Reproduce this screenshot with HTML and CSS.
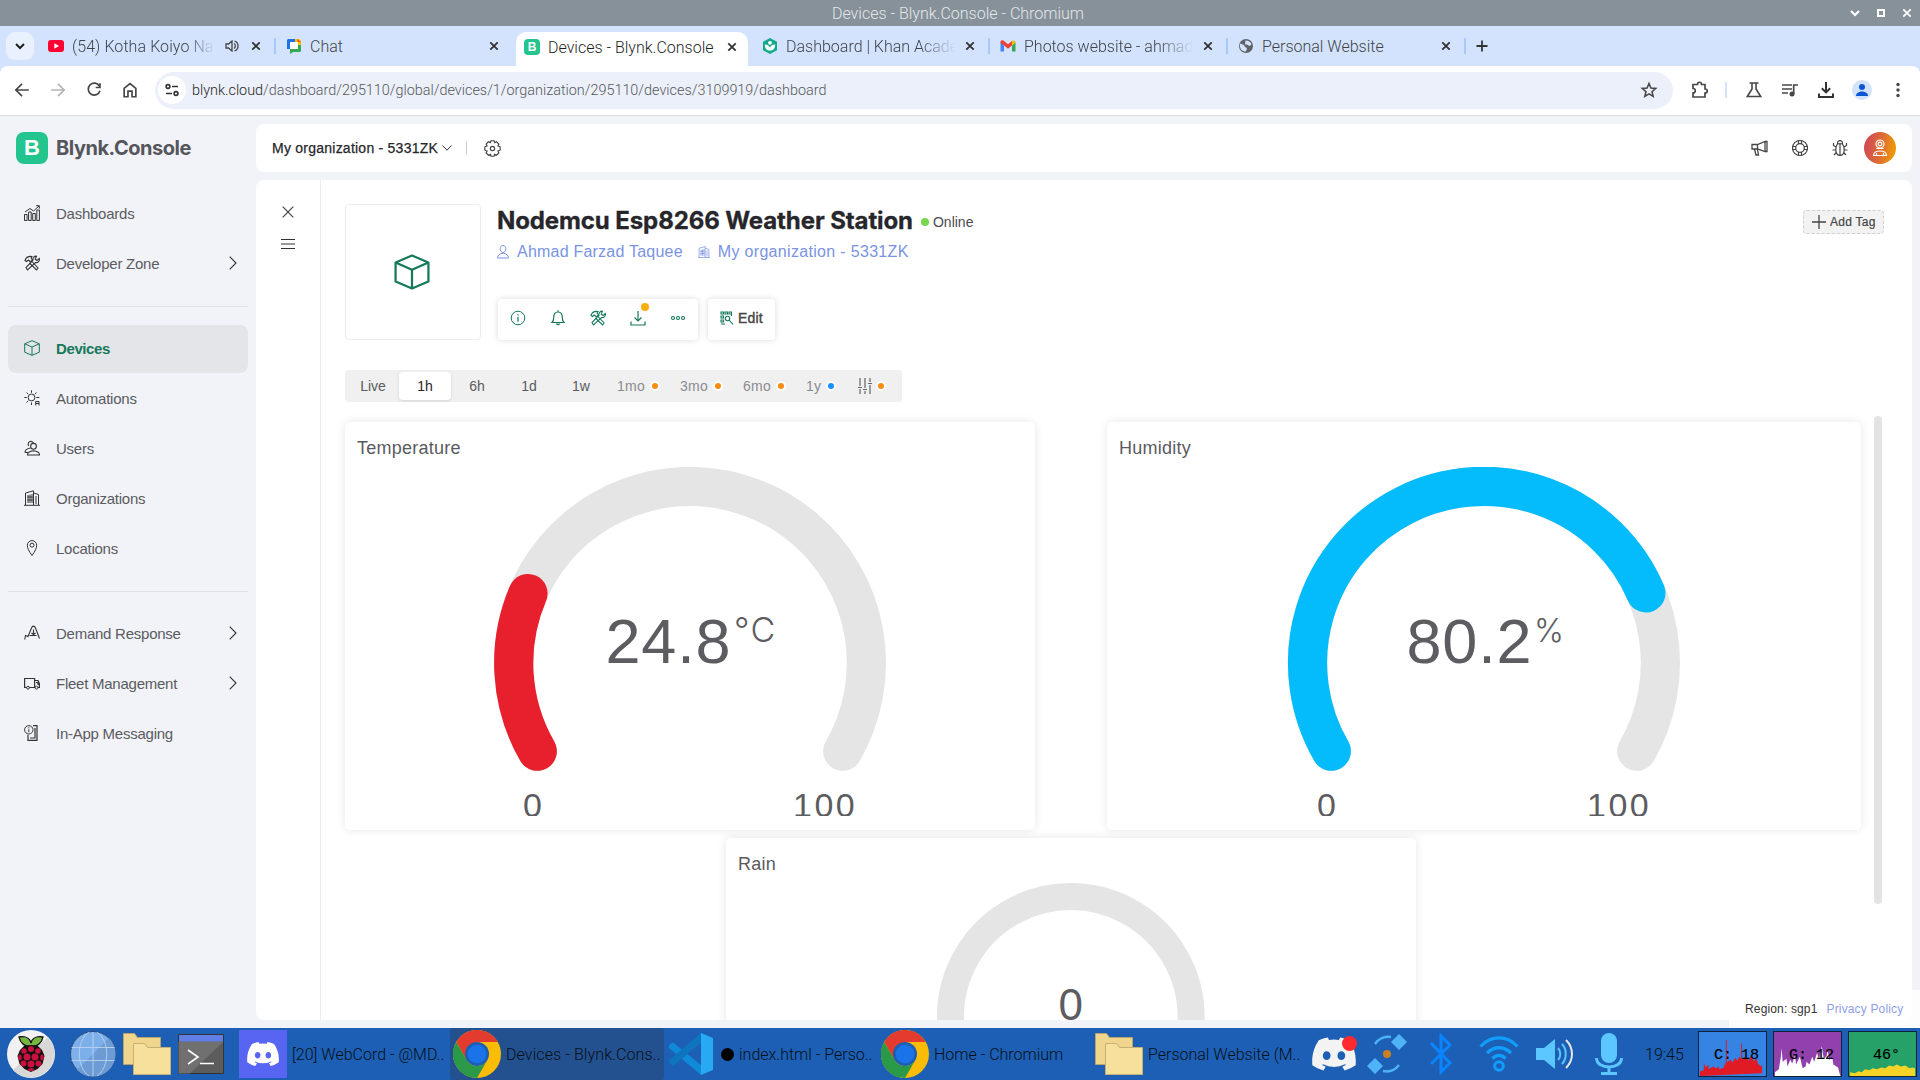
FILE: index.html
```html
<!DOCTYPE html>
<html lang="en">
<head>
<meta charset="utf-8">
<title>Devices - Blynk.Console</title>
<link rel="stylesheet" href="styles.css">
</head>
<body>
<svg class="sprite" width="0" height="0">
  <defs>
    <symbol id="x" viewBox="0 0 10 10"><path d="M1.3 1.3l7.4 7.4M8.7 1.3L1.3 8.7" fill="none" stroke="currentColor" stroke-width="1.8"/></symbol>
    <symbol id="tools" viewBox="0 0 16 16"><g fill="none" stroke="currentColor" stroke-width="1.1"><path d="M1 5.500C2 2.500 4.500 1 8 1.500L7 3l1.500 2-2 2-2-2L2.500 6.500z"/><path d="M7.500 6l6.500 7-1.500 2L5.500 8"/><path d="M12.500 1.200a3.200 3.200 0 0 0-3.500 4L2 12.500 3.500 15l8-7.500a3.200 3.200 0 0 0 3.800-4L13 5.500 11.200 4z"/></g></symbol>
    <symbol id="cube" viewBox="0 0 16 16"><path d="M8 .7L15.300 3.800v8.400L8 15.300.7 12.200V3.800zM.7 3.800L8 7l7.300-3.200M8 7v8.300" fill="none" stroke="currentColor" stroke-linejoin="round"/></symbol>
    <symbol id="building" viewBox="0 0 16 16"><path d="M0 15.300h16M1.500 15V3l8-2.200V15M9.500 3l5 1.500V15M4 5v8M6 4.500V13M8 4v9M12 6v8M3.500 7h5M3.500 10h5" fill="none" stroke="currentColor"/></symbol>
    <symbol id="chev" viewBox="0 0 8 14"><path d="M.7.700L7 7 .7 13.300" fill="none" stroke="currentColor" stroke-width="1.100"/></symbol>
    <symbol id="download" viewBox="0 0 16 16"><path d="M8 1v10M4.500 7.500L8 11l3.500-3.500M1 11.500V15h14v-3.500" fill="none" stroke="currentColor" stroke-width="1.200"/></symbol>
    <symbol id="chrome" viewBox="0 0 48 48"><circle cx="24" cy="24" r="24" fill="#fbbc05"/><path d="M3.200 12A24 24 0 0 1 44.800 12H24L13.600 30z" fill="#e33b2e"/><path d="M3.200 12A24 24 0 0 0 24 48L34.400 30A12 12 0 0 1 13.600 30z" fill="#2a9a48"/><circle cx="24" cy="24" r="12" fill="#1c5fb4"/><circle cx="24" cy="24" r="9.300" fill="#1a73e8"/></symbol>
    <symbol id="folders" viewBox="0 0 48 42"><path d="M.5.500h11l3 4h23v27H.5z" fill="#f0d68c" stroke="#b9a56c"/><path d="M10.500 10.500h11l3 4h23v27h-37z" fill="#f7e09b" stroke="#c4af74"/></symbol>
    <symbol id="discord" viewBox="0 0 24 18"><path fill="currentColor" fill-rule="evenodd" d="M20.300 1.500A19 19 0 0 0 15.400 0l-.7 1.300a18 18 0 0 0-5.400 0L8.600 0a19 19 0 0 0-4.900 1.500C.6 6.100-.2 10.700.2 15.100A20 20 0 0 0 6.200 18l1.300-2-2-1 .5-.4a14 14 0 0 0 12 0l.5.400-2 1 1.300 2a20 20 0 0 0 6-2.900c.5-5.200-.8-9.700-3.500-13.600zM8 12.300c-1.200 0-2.100-1.100-2.100-2.400S6.800 7.500 8 7.500s2.200 1.100 2.100 2.400c0 1.300-.9 2.400-2.100 2.400zm8 0c-1.200 0-2.100-1.100-2.100-2.400s.9-2.400 2.100-2.400 2.200 1.100 2.100 2.400c0 1.300-.9 2.400-2.100 2.400z"/></symbol>
  </defs>
</svg>

<header class="titlebar">
  <span class="titlebar-text">Devices - Blynk.Console - Chromium</span>
  <div class="window-buttons">
    <svg width="10" height="10" viewBox="0 0 10 10"><path d="M1 3l4 4 4-4" fill="none" stroke="#fff" stroke-width="2.200"/></svg>
    <svg width="10" height="10" viewBox="0 0 10 10"><path d="M2 2h6v6H2z" fill="none" stroke="#fff" stroke-width="2"/></svg>
    <svg width="10" height="10"><use href="#x" color="#fff"/></svg>
  </div>
</header>

<nav class="tabs">
  <span class="tab-search"><svg width="10" height="8" viewBox="0 0 10 8"><path d="M1 2l4 4 4-4" fill="none" stroke="#1f1f1f" stroke-width="2"/></svg></span>
  <div class="tab">
    <svg class="fav" viewBox="0 0 16 16"><rect y="2" width="16" height="12" rx="3" fill="#f03"/><path d="M6.300 5.300v5.400L11 8z" fill="#fff"/></svg>
    <span class="tab-title fade playing">(54) Kotha Koiyo Na</span>
    <svg class="sound" viewBox="0 0 14 12"><path d="M1 4v4h2.500L7 11V1L3.500 4z" fill="none" stroke="#474747" stroke-width="1.300"/><path d="M9 3.500a3 3 0 0 1 0 5M9.500 1a5.300 5.300 0 0 1 0 10" fill="none" stroke="#474747" stroke-width="1.300"/></svg>
    <svg class="close"><use href="#x"/></svg>
  </div>
  <div class="tab sep">
    <svg class="fav" viewBox="0 0 16 16"><path d="M2 1h8v3H5v7H1V2z" fill="#1a73e8"/><path d="M9 1h4l2 2v5h-3V4H9z" fill="#fbbc04"/><path d="M12 7h3v6l-1 1H7l-3 2v-5h8z" fill="#34a853"/><path d="M4 4h8v7H4z" fill="#fff"/><path d="M11 1l4 3h-3z" fill="#ea4335"/></svg>
    <span class="tab-title">Chat</span>
    <svg class="close"><use href="#x"/></svg>
  </div>
  <div class="tab active">
    <span class="fav blynk">B</span>
    <span class="tab-title">Devices - Blynk.Console</span>
    <svg class="close"><use href="#x"/></svg>
  </div>
  <div class="tab">
    <svg class="fav" viewBox="0 0 16 16"><path d="M8 0l7 3.800v8.400L8 16l-7-3.800V3.800z" fill="#14a98b"/><circle cx="8" cy="4.800" r="1.900" fill="#fff"/><path d="M2.800 6.500c3 0 4.600 1.300 5.200 3.200.6-1.900 2.200-3.200 5.200-3.200 0 4-2 6-5.200 6s-5.200-2-5.200-6z" fill="#fff"/></svg>
    <span class="tab-title fade">Dashboard | Khan Acade</span>
    <svg class="close"><use href="#x"/></svg>
  </div>
  <div class="tab sep">
    <svg class="fav" viewBox="0 0 16 16"><path d="M.5 4v9.500H4V7.500z" fill="#4285f4"/><path d="M12 7.500v6h3.500V4z" fill="#34a853"/><path d="M.5 3.500C1 2 3 2 4 3l4 3.200L12 3v4.500L8 10.700 4 7.500.5 5z" fill="#ea4335"/><path d="M12 3c1.500-1.200 3.500-.5 3.500 1.300L12 7.500z" fill="#fbbc04"/></svg>
    <span class="tab-title fade">Photos website - ahmad</span>
    <svg class="close"><use href="#x"/></svg>
  </div>
  <div class="tab sep last">
    <svg class="fav" viewBox="0 0 16 16"><circle cx="8" cy="8" r="7" fill="#5f6368"/><path d="M2 5.500l4 1.500 1 2 2 1-1 3.500C4 13.500 2 11 2 8zM7.500 2.500c3 0 5 1 6 4L11.500 8 9 6.500H7z" fill="#d3e3fd"/></svg>
    <span class="tab-title">Personal Website</span>
    <svg class="close"><use href="#x"/></svg>
  </div>
  <svg class="new-tab" viewBox="0 0 12 12"><path d="M6 .5v11M.5 6h11" stroke="#333" stroke-width="1.800"/></svg>
</nav>

<div class="toolbar">
  <div class="nav-buttons">
    <svg viewBox="0 0 16 16"><path d="M14 8H3M8 2.500L2.500 8 8 13.500" fill="none" stroke="#474747" stroke-width="1.500"/></svg>
    <svg viewBox="0 0 16 16"><path d="M2 8h11M8 2.500L13.500 8 8 13.500" fill="none" stroke="#b4b4b4" stroke-width="1.500"/></svg>
    <svg viewBox="0 0 16 16"><path d="M12.800 4.500A5.300 5.300 0 1 0 13.300 8.700M13.300 2v3.800H9.500" fill="none" stroke="#474747" stroke-width="1.500"/></svg>
    <svg viewBox="0 0 16 16"><path d="M2.800 6.500L8 2.300l5.200 4.200V14H9.800V9H6.200v5H2.800z" fill="none" stroke="#474747" stroke-width="1.500"/></svg>
  </div>
  <div class="omnibox">
    <span class="site-info"><svg width="14" height="14" viewBox="0 0 14 14"><g fill="none" stroke="#333" stroke-width="1.600"><circle cx="3" cy="3.500" r="1.900"/><path d="M7 3.500h6M1 10.500h6"/><circle cx="11" cy="10.500" r="1.900"/></g></svg></span>
    <span class="url"><b>blynk.cloud</b>/dashboard/295110/global/devices/1/organization/295110/devices/3109919/dashboard</span>
    <svg class="star" viewBox="0 0 16 16"><path d="M8 2.200l1.700 4 4.300.4-3.300 2.900 1 4.200L8 11.500l-3.700 2.200 1-4.200L2 6.600l4.300-.4z" fill="none" stroke="#474747" stroke-width="1.400"/></svg>
  </div>
  <div class="browser-actions">
    <svg viewBox="0 0 18 18"><path d="M2 3.500h4.500c0-3 4-3 4 0H14V8c3 0 3 4 0 4v4H2v-4c3 0 3-4.500 0-4.500z" fill="none" stroke="#474747" stroke-width="1.700"/></svg>
    <i class="action-sep"></i>
    <svg viewBox="0 0 18 18"><path d="M4.500 2h9M7 2v6l-4.700 7.500h13.400L11 8V2" fill="none" stroke="#474747" stroke-width="1.600"/></svg>
    <svg viewBox="0 0 18 18"><path d="M1 4h10M1 8h10M1 12h6" stroke="#474747" stroke-width="1.700"/><circle cx="11" cy="13" r="2.500" fill="#474747"/><path d="M12.700 13V4H17" fill="none" stroke="#474747" stroke-width="1.700"/></svg>
    <svg viewBox="0 0 18 18"><path d="M9 1v10M4.800 7.200L9 11.400l4.200-4.200M2 12.500V16h14v-3.500" fill="none" stroke="#333" stroke-width="2"/></svg>
    <span class="profile"><svg width="14" height="14" viewBox="0 0 14 14"><circle cx="7" cy="4" r="3" fill="#0b57d0"/><path d="M1 13c0-6 12-6 12 0z" fill="#0b57d0"/></svg></span>
    <svg viewBox="0 0 18 18"><g fill="#474747"><circle cx="9" cy="3.500" r="1.700"/><circle cx="9" cy="9" r="1.700"/><circle cx="9" cy="14.500" r="1.700"/></g></svg>
  </div>
</div>

<div class="app">
  <aside class="sidebar">
    <div class="brand"><span class="brand-mark">B</span><span class="brand-name">Blynk.Console</span></div>
    <ul class="menu">
      <li><svg viewBox="0 0 16 16"><path d="M.5 9.500h2.600v6H.5zM4.600 7h2.600v8.500H4.600zM8.700 8.500h2.600v7H8.700zM12.800 5h2.600v10.500h-2.600zM1 7l5-3.500L9.500 6 15 1M12 .7h3.300v3" fill="none" stroke="currentColor"/></svg><span>Dashboards</span></li>
      <li><svg><use href="#tools"/></svg><span>Developer Zone</span><svg class="chev"><use href="#chev"/></svg></li>
    </ul>
    <ul class="menu">
      <li class="selected"><svg><use href="#cube"/></svg><span>Devices</span></li>
      <li><svg viewBox="0 0 16 16"><g fill="none" stroke="currentColor"><circle cx="7.500" cy="7.500" r="3.400"/><path d="M7.500.300v2.500M7.500 12.500V15M.3 7.500h2.500M12.300 7.500h3M2.500 2.500l1.700 1.700M12.500 2.500l-1.700 1.700M2.500 12.500l1.700-1.700M11.700 15.500v-4h3.300v4M11.700 13.500H15"/></g></svg><span>Automations</span></li>
      <li><svg viewBox="0 0 16 16"><g fill="none" stroke="currentColor" stroke-width="1.100"><path d="M4.500 6C2.500 1 9 0 9.500 3.500"/><circle cx="9.500" cy="6.300" r="2.900"/><path d="M3.500 15h12c0-3-2-4-6-4.300-4 .3-6 1.300-6 4.300zM1 12.500c0-3 2-4 5.500-4.500M1 12.500h3"/></g></svg><span>Users</span></li>
      <li><svg><use href="#building"/></svg><span>Organizations</span></li>
      <li><svg viewBox="0 0 16 16"><path d="M8 15.500C5 11 3.300 8.500 3.300 5.300a4.700 4.700 0 0 1 9.400 0C12.700 8.500 11 11 8 15.500z" fill="none" stroke="currentColor"/><circle cx="8" cy="5.200" r="2" fill="none" stroke="currentColor"/></svg><span>Locations</span></li>
    </ul>
    <ul class="menu">
      <li><svg viewBox="0 0 16 16"><path d="M.7 14.500l.8-4 2.500 1L7.500 3C8.500.500 10.500.500 11.500 3l4 10.500M5.500 10.500h7M9.500 4.500v5M7.500 8l2 1.500 2-1.500" fill="none" stroke="currentColor" stroke-width="1.100"/></svg><span>Demand Response</span><svg class="chev"><use href="#chev"/></svg></li>
      <li><svg viewBox="0 0 16 16"><path d="M.6 3.500h10v9H.6zM10.600 5.500h3.500l1.300 3v4h-4.800M12 7.500h2v2h1.500" fill="none" stroke="currentColor" stroke-width="1.200"/><circle cx="4" cy="12.700" r="1.400" fill="#f2f3f8" stroke="currentColor"/><circle cx="12.500" cy="12.700" r="1.400" fill="#f2f3f8" stroke="currentColor"/></svg><span>Fleet Management</span><svg class="chev"><use href="#chev"/></svg></li>
      <li><svg viewBox="0 0 16 16"><path d="M9 .7h4v14.600H4V10M6 13h5V3" fill="none" stroke="currentColor" stroke-width="1.200"/><circle cx="4.800" cy="4.800" r="4.200" fill="#f2f3f8" stroke="currentColor"/><path d="M4.800 2.200v1.200M4.800 4.300v3" stroke="currentColor"/></svg><span>In-App Messaging</span></li>
    </ul>
  </aside>

  <div class="content">
    <div class="orgbar">
      <span class="org-name">My organization - 5331ZK</span>
      <svg class="org-chev" viewBox="0 0 10 6"><path d="M.5.500L5 5.200 9.500.500" fill="none" stroke="#333"/></svg>
      <i class="org-sep"></i>
      <svg class="gear" viewBox="0 0 16 16"><g fill="none" stroke="#444" stroke-width="1.100"><path d="M6.500.700h3l.5 1.800 1.800-.8 2.200 2.100-.9 1.800 2.100.8v3.200l-2.100.8.900 1.800-2.200 2.100-1.800-.8-.5 1.800h-3L6 13.500l-1.800.8L2 12.200l.9-1.800-2.100-.8V6.400l2.100-.8L2 3.800l2.200-2.100 1.800.8z"/><circle cx="8" cy="8" r="2"/></g></svg>
      <div class="org-actions">
        <svg viewBox="0 0 18 18"><path d="M1 5.500h5.500L14 2.500v10L6.500 10H1zM6.500 5.500V10M3.500 10l1.500 6h2.500l-1-5.500M14 2.500h2v10h-2" fill="none" stroke="#444" stroke-width="1.300"/></svg>
        <svg viewBox="0 0 18 18"><g fill="none" stroke="#444" stroke-width="1.200"><circle cx="9" cy="9" r="7.500"/><circle cx="9" cy="9" r="4.300"/><path d="M7.500 1.500v3.500M10.500 1.500v3.500M7.500 16.500V13M10.500 16.500V13M1.500 7.500H5M1.500 10.500H5M16.500 7.500H13M16.500 10.500H13"/></g></svg>
        <svg viewBox="0 0 18 18"><path d="M9 4.500c3 0 4.200 2.500 4.200 6S11.500 16.500 9 16.500s-4.200-2.500-4.200-6S6 4.500 9 4.500zM9 5v11.500M6.500 5c-.5-4.500 5.500-4.500 5 0M5 8L2.500 6.500V4M13 8l2.500-1.500V4M4.800 11H1.500M13.200 11h3.300M5.300 13.500L3 16M12.700 13.500L15 16" fill="none" stroke="#444" stroke-width="1.200"/></svg>
        <span class="avatar"><svg width="16" height="18" viewBox="0 0 16 18"><g fill="none" stroke="#fff" stroke-width="1.200"><circle cx="8" cy="5" r="4"/><circle cx="8" cy="5" r="1.800"/><path d="M4.500 9.500h7M1.500 16.500c0-6 13-6 13 0zM4.500 16.500v-2.500M11.500 16.500v-2.500"/></g></svg></span>
      </div>
    </div>

    <main class="panel">
      <div class="rail">
        <svg width="12" height="12" viewBox="0 0 12 12"><path d="M.7.700l10.600 10.600M11.300.7L.7 11.300" stroke="#444" stroke-width="1.200"/></svg>
        <svg width="14" height="12" viewBox="0 0 14 12"><path d="M0 1.500h14M0 6h14M0 10.500h14" stroke="#333" stroke-width="1.200"/></svg>
      </div>
      <div class="device">
        <section class="device-head">
          <div class="device-image"><svg width="36" height="36"><use href="#cube"/></svg></div>
          <div class="device-info">
            <div class="device-title"><h1>Nodemcu Esp8266 Weather Station</h1><i class="online-dot"></i><span class="online">Online</span></div>
            <div class="device-meta">
              <svg viewBox="0 0 12 14"><path d="M6 .6c1.800 0 2.800 1.200 2.800 3.200S7.500 7.500 6 7.500 3.200 5.800 3.200 3.800 4.200.6 6 .6zM.6 13c0-3 2-4.300 5.400-4.800 3.400.5 5.400 1.800 5.400 4.800z" fill="none" stroke="currentColor"/></svg>
              <span>Ahmad Farzad Taquee</span>
              <svg class="meta-org"><use href="#building"/></svg>
              <span class="meta-name">My organization - 5331ZK</span>
            </div>
            <div class="device-actions">
              <div class="action-group">
                <svg viewBox="0 0 16 16"><circle cx="8" cy="8" r="6.800" fill="none" stroke="currentColor"/><path d="M8 4.200v1.300M8 6.800v5" stroke="currentColor" stroke-width="1.200"/></svg>
                <svg viewBox="0 0 16 16"><path d="M2 12.500h12c-1.500-1.500-1.700-2.500-1.700-5C12.300 4 10.500 2 8 2S3.700 4 3.700 7.500c0 2.500-.2 3.500-1.700 5zM8 .3V2M6.500 13.500c.5 1.500 2.500 1.500 3 0" fill="none" stroke="currentColor" stroke-width="1.200"/></svg>
                <svg><use href="#tools"/></svg>
                <span class="badged"><svg><use href="#download"/></svg><i></i></span>
                <svg viewBox="0 0 16 16"><g fill="none" stroke="currentColor" stroke-width="1.100"><circle cx="3" cy="8" r="1.500"/><circle cx="8" cy="8" r="1.500"/><circle cx="13" cy="8" r="1.500"/></g></svg>
              </div>
              <div class="edit"><svg viewBox="0 0 14 14"><g fill="none" stroke="currentColor" stroke-width="1.100"><path d="M1 1h2.500v2H1zM5 1h2.500v2H5zM9 1h2.500v2H9zM1 5h2.500v2H1zM1 9h2.500v2H1zM1 13h4M11.500 3v2"/><circle cx="7.500" cy="7.500" r="2.200"/><path d="M9 9l4 4.300"/></g></svg><span>Edit</span></div>
            </div>
          </div>
          <div class="add-tag"><svg width="14" height="14" viewBox="0 0 14 14"><path d="M7 0v14M0 7h14" stroke="#444" stroke-width="1.300"/></svg><span>Add Tag</span></div>
        </section>

        <div class="ranges">
          <span>Live</span><span class="on">1h</span><span>6h</span><span>1d</span><span>1w</span>
          <span class="pro">1mo<i></i></span><span class="pro">3mo<i></i></span><span class="pro">6mo<i></i></span><span class="pro year">1y<i class="annual"></i></span>
          <span class="pro custom"><svg width="14" height="16" viewBox="0 0 14 16"><path d="M2 0v8M2 11v5M7 0v10M7 13v3M12 0v4M12 7v9M0 9.500h4M5 11.500h4M10 5.500h4" fill="none" stroke="#666" stroke-width="1.200"/></svg><i></i></span>
        </div>

        <div class="widgets">
          <div class="row">
            <article class="card">
              <h2>Temperature</h2>
              <svg class="gauge" viewBox="345 467 690 349" width="690" height="349">
                <path class="track" d="M537.300 751.200A176.400 176.400 0 1 1 842.700 751.200"/>
                <path class="bar red" d="M537.300 751.200A176.400 176.400 0 0 1 528 593.500"/>
                <text class="value" x="605.500" y="662.500">24.8</text>
                <text class="unit" x="734" y="642">°C</text>
                <text class="limit" x="523" y="817">0</text>
                <text class="limit" x="793" y="817">100</text>
              </svg>
            </article>
            <article class="card wide">
              <h2>Humidity</h2>
              <svg class="gauge" viewBox="1107 467 754 349" width="754" height="349">
                <path class="track" d="M1331.300 751.200A176.400 176.400 0 1 1 1636.700 751.200"/>
                <path class="bar blue" d="M1331.300 751.200A176.400 176.400 0 1 1 1645.900 592.900"/>
                <text class="value" x="1406.500" y="662.500">80.2</text>
                <text class="unit percent" x="1534" y="642">%</text>
                <text class="limit" x="1317" y="817">0</text>
                <text class="limit" x="1587" y="817">100</text>
              </svg>
            </article>
          </div>
          <div class="row second">
            <article class="card">
              <h2>Rain</h2>
              <svg class="gauge" viewBox="726 883 690 349" width="690" height="349">
                <path class="track thin" d="M966.600 1077A120.300 120.300 0 1 1 1175 1077"/>
                <text class="value small" x="1058.500" y="1019.500">0</text>
              </svg>
            </article>
          </div>
          <i class="scrollbar"></i>
        </div>
      </div>
    </main>
    <footer class="region"><span>Region: sgp1</span><a>Privacy Policy</a></footer>
  </div>
</div>

<footer class="taskbar">
  <svg class="t-pi" viewBox="0 0 48 48"><circle cx="24" cy="24" r="24" fill="#f1f1f1"/><path d="M6 40A24 24 0 0 0 41 7z" fill="#d8d8d8"/><path d="M23.500 16C18 17 13 13 12 7c6-1 11 1 12 6 1-5 6-7 12-6-1 6-6 10-11.500 9z" fill="#77b543" stroke="#111" stroke-width="1.300"/><path d="M24 15l7 1 4 4 2.500 6-2 8-5 5-6.500 3-6.500-3-5-5-2-8L13 20l4-4z" fill="#111"/><g fill="#c9103f"><circle cx="24" cy="19" r="3"/><circle cx="17" cy="21" r="2.800"/><circle cx="31" cy="21" r="2.800"/><circle cx="20" cy="27" r="3.500"/><circle cx="28" cy="27" r="3.500"/><ellipse cx="13" cy="27.500" rx="1.700" ry="3"/><ellipse cx="35" cy="27.500" rx="1.700" ry="3"/><circle cx="24" cy="34" r="3.500"/><circle cx="16.500" cy="33.500" r="3"/><circle cx="31.500" cy="33.500" r="3"/><ellipse cx="24" cy="39.500" rx="3" ry="1.500"/></g></svg>
  <svg class="t-globe" viewBox="0 0 46 46"><circle cx="23" cy="23" r="22.500" fill="#7db0ea" stroke="#294c7b"/><path d="M7 39A22.500 22.500 0 0 0 39 7z" fill="#6c9cd3"/><path d="M23 1v44M1.500 16.500h43M1.500 29.500h43M19 1C6 10 6 36 19 45M27 1c13 9 13 35 0 44" fill="none" stroke="#b9d3f0" stroke-width=".9"/></svg>
  <svg class="t-folders"><use href="#folders"/></svg>
  <svg class="t-term" viewBox="0 0 46 40"><path d="M.5.500h45v39H.5z" fill="#5c5c5c" stroke="#333"/><path d="M.5 7.500h45L12 39.500H.5z" fill="#707070"/><path d="M1 1h44v6.500H1z" fill="#5f7fe6"/><path d="M10 16l10 7-10 7M22 29.500h14" fill="none" stroke="#fff" stroke-width="1.600"/></svg>
  <div class="task webcord"><span class="discord-tile"><svg width="32" height="24"><use href="#discord"/></svg></span><span>[20] WebCord - @MD..</span></div>
  <div class="task current"><svg class="ic48"><use href="#chrome"/></svg><span>Devices - Blynk.Cons..</span></div>
  <div class="task vscode"><svg width="44" height="42" viewBox="0 0 44 42"><path d="M0 12l4-2.500L32 32v10L0 15z" fill="#0f8ad8"/><path d="M0 30l4 3L32 10V0L0 27z" fill="#0d74bd"/><path d="M32 0l12 5v32l-12 5z" fill="#27a9f4"/></svg><b class="unsaved"></b><span>index.html - Perso..</span></div>
  <div class="task home"><svg class="ic48"><use href="#chrome"/></svg><span>Home - Chromium</span></div>
  <div class="task files"><svg width="48" height="42"><use href="#folders"/></svg><span>Personal Website (M..</span></div>
  <div class="tray">
    <span class="t-discord"><svg width="44" height="36"><use href="#discord"/></svg><i></i></span>
    <svg class="t-conn" viewBox="0 0 40 40"><path d="M8 10A16 16 0 0 1 24 3M32 31A16 16 0 0 1 16 37" fill="none" stroke="#4db2f7" stroke-width="2.500"/><path d="M32 0l8 8-8 8-8-8zM8 24l8 8-8 8-8-8z" fill="#4fb3f8"/><circle cx="20" cy="20" r="4" fill="#c9801f"/></svg>
    <svg class="t-bt" viewBox="0 0 22 42"><path d="M1 10l19 20-9 9V3l9 9L1 31" fill="none" stroke="#0a84ff" stroke-width="3"/></svg>
    <svg class="t-wifi" viewBox="0 0 40 36"><path d="M1.500 10.500C12-1 28-1 38.500 10.500M8 17c7-7 17-7 24 0M13.500 22.500c4-4 9-4 13 0" fill="none" stroke="#109dfb" stroke-width="3.300"/><circle cx="20" cy="30" r="4.300" fill="none" stroke="#109dfb" stroke-width="3"/></svg>
    <svg class="t-vol" viewBox="0 0 38 32"><path d="M0 10h8L19 1v30L8 22H0z" fill="#5cc6ff"/><path d="M22 10c3 3 3 9 0 12M26 6c5 5 5 15 0 20" fill="none" stroke="#5cc6ff" stroke-width="2"/><path d="M30 2c8 8 8 20 0 28" fill="none" stroke="#e6e6e6" stroke-width="2"/></svg>
    <svg class="t-mic" viewBox="0 0 28 42"><rect x="6" width="16" height="30" rx="8" fill="#5cc6ff"/><path d="M1.500 25c0 12 25 12 25 0M14 34v6M6 40.500h16" fill="none" stroke="#5cc6ff" stroke-width="3"/></svg>
    <span class="clock">19:45</span>
    <span class="meter cpu"><svg viewBox="0 0 68 46"><path d="M0 46V41l4-1V32l2 5 3-3v5l5-3 3 2 3-2v3l5-2 1-5 1 3V8h1v24l4-3 2 3 3-5 2 3 2-4 2 2V12h1v17l4-3 3 4 2-5 3 5 3-2 2 6 4 2v7z" fill="#e01b24"/></svg><span>C: 18</span></span>
    <span class="meter gpu"><svg viewBox="0 0 68 46"><path d="M0 46V42l4-3 2-12 1-10 1 14 4-3 1 8 3-7 2 4 3-9 1 10 4-8 3 12 3-2 1-5 3 3 3-8 2 5 3-9 2 7 3-14 2 13 3-3 1-6 2 10 3-2 1 7 5 3 2 8 2 3v4z" fill="#fff"/></svg><span>G: 12</span></span>
    <span class="meter temp"><svg viewBox="0 0 68 46"><path d="M0 46v-4l5 1 4-2 3 1 4-3 4 1 4-2 4 1 5-2 4 1 4-3 4 1 4-2 4 2 5-1 4 3 4-1 2 1v8z" fill="#f5d327"/></svg><span>46°</span></span>
  </div>
</footer>
</body>
</html>
```
FILE: styles.css
```css
* { box-sizing: border-box; }
body { margin: 0; width: 1920px; height: 1080px; overflow: hidden; display: flex; flex-direction: column; font-family: "Liberation Sans", Arial, sans-serif; color: #5a5b60; background: #f2f3f8; }
svg { display: block; flex: none; }
.sprite { position: absolute; }
h1, h2, ul { margin: 0; padding: 0; list-style: none; }
span { white-space: nowrap; }

/* browser window */
.titlebar { flex: none; height: 26px; background: #879199; display: grid; grid-template-columns: 1fr auto 1fr; align-items: center; color: #e4e7ea; font: 300 16px Roboto, sans-serif; }
.titlebar-text { grid-column: 2; margin-left: -4px; }
.window-buttons { justify-self: end; display: flex; gap: 16px; padding-right: 8px; }
.tabs { flex: none; height: 48px; padding-bottom: 8px; margin-bottom: -8px; background: #d3e3fd; display: flex; align-items: center; font: 300 16px Roboto, sans-serif; color: #3f4348; }
.tab-search { width: 28px; height: 28px; margin: 0 2px 0 6px; border-radius: 9px; background: #eaf1fe; display: grid; place-items: center; }
.tab { width: 238px; height: 34px; display: flex; align-items: center; padding: 0 13px 0 12px; position: relative; flex: none; }
.tab.sep::before, .tab.last::after { content: ""; position: absolute; left: 0; top: 9px; width: 2px; height: 16px; background: #a8c7fa; }
.tab.last::after { left: auto; right: -2px; }
.tab.active { width: 232px; margin: 0 2px 0 4px; padding: 0 11px 4px 8px; background: #fff; border-radius: 10px 10px 0 0; align-self: flex-end; color: #1f1f1f; }
.fav { width: 16px; height: 16px; margin-right: 8px; flex: none; }
.fav.blynk { background: #23c48e; border-radius: 4px; color: #fff; font: bold 12px/16px "Liberation Sans", sans-serif; text-align: center; }
.tab-title { flex: 1; overflow: hidden; }
.fade { -webkit-mask-image: linear-gradient(90deg, #000 78%, transparent 99%); mask-image: linear-gradient(90deg, #000 78%, transparent 99%); margin-right: 8px; }
.playing { letter-spacing: .08px; }
.sound { width: 14px; height: 12px; margin-right: 12px; }
.close { width: 10px; height: 10px; color: #333; }
.new-tab { width: 12px; height: 12px; margin-left: 12px; }
.toolbar { flex: none; height: 50px; background: #fff; border-bottom: 1px solid #dcdcdc; border-radius: 8px 8px 0 0; display: flex; align-items: center; padding: 0 13px; }
.nav-buttons { display: flex; gap: 18px; width: 144px; padding-bottom: 1px; }
.nav-buttons svg { width: 18px; height: 18px; }
.omnibox { width: 1518px; height: 37px; border-radius: 19px; background: #ecf0fa; display: flex; align-items: center; padding: 0 15px 1px 3px; flex: none; }
.site-info { width: 28px; height: 28px; border-radius: 50%; background: #fff; display: grid; place-items: center; }
.url { flex: 1; font: 300 14.400px Roboto, sans-serif; color: #55585c; margin-left: 6px; }
.url b { font-weight: 300; color: #1f1f1f; }
.star { width: 18px; height: 18px; }
.browser-actions { flex: none; display: flex; align-items: center; gap: 18px; margin-left: 18px; padding-bottom: 1px; }
.browser-actions svg { width: 18px; height: 18px; }
.action-sep { width: 2px; height: 16px; background: #d3e3fd; margin-left: -2px; }
.profile { width: 20px; height: 20px; border-radius: 50%; background: #d3e3fd; display: grid; place-items: center; margin: 0 -1px; }
.browser-actions .profile svg { width: 14px; height: 14px; }

/* console */
.app { height: 912px; flex: none; display: flex; }
.sidebar { width: 256px; padding: 16px 8px 0; }
.brand { display: flex; align-items: center; gap: 8px; padding-left: 8px; height: 32px; margin-bottom: 26px; }
.brand-mark { width: 32px; height: 32px; border-radius: 8px; background: #23c48e; color: #fff; font: bold 22px/32px "Liberation Sans", sans-serif; text-align: center; }
.brand-name { font: bold 20px Inter, sans-serif; letter-spacing: -.47px; color: #55565b; }
.menu { display: flex; flex-direction: column; gap: 2px; padding-bottom: 18px; }
.menu + .menu { border-top: 1px solid #e0e1e6; padding-top: 18px; }
.menu li { height: 48px; border-radius: 8px; display: flex; align-items: center; padding: 0 11px 2px 16px; font-size: 15px; letter-spacing: -.25px; }
.menu li > svg { width: 16px; height: 16px; margin-right: 16px; color: #333; }
.menu li span { flex: 1; }
.menu li > .chev { width: 8px; height: 14px; margin: 0; }
.menu .selected { background: #e4e5e9; color: #15795a; font-weight: bold; letter-spacing: -.39px; }
.menu .selected > svg { color: #15795a; }
.content { width: 1656px; padding-top: 8px; position: relative; }
.orgbar { height: 48px; background: #fff; border-radius: 8px; display: flex; align-items: center; padding: 0 16px; margin-bottom: 8px; }
.org-name { font-size: 14px; letter-spacing: .24px; color: #26272b; -webkit-text-stroke: .25px; }
.org-chev { width: 10px; height: 6px; margin-left: 4px; }
.org-sep { width: 1px; height: 14px; background: #ccc; margin: 0 17px 0 14px; }
.gear { width: 17px; height: 17px; }
.org-actions { margin-left: auto; display: flex; align-items: center; gap: 22px; }
.org-actions svg { width: 18px; height: 18px; }
.org-actions .avatar { width: 32px; height: 32px; border-radius: 50%; background: linear-gradient(100deg, #d0435c, #dd6a35 50%, #f2a500); display: grid; place-items: center; margin-left: -7px; }
.panel { height: 840px; background: #fff; border-radius: 8px; display: flex; overflow: hidden; }
.rail { width: 65px; border-right: 1px solid #ececef; padding: 26px 0 0; display: flex; flex-direction: column; align-items: center; gap: 20px; }
.device { width: 1591px; padding: 24px 28px 0 24px; }
.device-head { display: flex; height: 136px; }
.device-image { width: 136px; border: 1px solid #ececec; border-radius: 4px; display: grid; place-items: center; color: #15795a; padding-right: 2px; }
.device-info { flex: 1; padding-left: 16px; display: flex; flex-direction: column; }
.device-title { height: 32px; display: flex; align-items: center; }
h1 { font: bold 24px Inter, sans-serif; letter-spacing: -.1px; color: #26262b; white-space: nowrap; -webkit-text-stroke: .3px; }
.online-dot { width: 8px; height: 8px; border-radius: 50%; background: #7ad651; margin: 4px 4px 0 8px; }
.online { font-size: 14px; margin-top: 4px; color: #4b4c51; }
.device-meta { display: flex; align-items: center; height: 30px; margin-top: 1px; color: #7b93e3; font-size: 16px; letter-spacing: .22px; }
.device-meta svg { width: 12px; height: 14px; margin-right: 8px; }
.device-meta .meta-org { margin-left: 15px; }
.meta-name { letter-spacing: .32px; }
.device-actions { display: flex; gap: 10px; margin-top: auto; padding-left: 1px; }
.action-group, .edit { height: 41px; border-radius: 4px; box-shadow: 0 0 6px rgba(0,0,0,.15); display: flex; align-items: center; color: #15795a; padding-bottom: 3px; }
.action-group { width: 200px; padding-left: 12px; gap: 24px; }
.action-group svg { width: 16px; height: 16px; }
.badged { position: relative; }
.badged i { position: absolute; right: -3px; top: -7px; width: 8px; height: 8px; border-radius: 50%; background: #faad14; }
.edit { width: 67px; padding-left: 12px; gap: 4px; font-size: 14px; letter-spacing: .2px; }
.edit svg { width: 14px; height: 14px; }
.edit span { color: #444; -webkit-text-stroke: .4px; }
.add-tag { height: 24px; width: 81px; margin-top: 6px; border: 1px dashed #cfcfcf; border-radius: 4px; background: #f2f2f2; display: flex; align-items: center; padding-left: 8px; gap: 4px; font-size: 12px; letter-spacing: .25px; color: #444; -webkit-text-stroke: .2px; }
.ranges { margin-top: 30px; width: 557px; height: 32px; background: #f0f0f0; border-radius: 4px; padding: 2px; display: flex; align-items: center; font-size: 14px; }
.ranges > span { flex: none; width: 52px; height: 28px; display: flex; align-items: center; justify-content: center; border-radius: 4px; }
.ranges .on { background: #fff; box-shadow: 0 1px 3px rgba(0,0,0,.12); color: #26262b; }
.ranges .pro { width: 63px; color: #8b8c90; justify-content: flex-start; padding-left: 10px; gap: 5px; letter-spacing: .3px; }
.ranges .pro.year, .ranges .pro.custom { width: 52px; }
.ranges .pro.custom { gap: 4px; }
.ranges i { width: 10px; height: 10px; border: 2px solid #fff; background: #fa8c16; border-radius: 50%; }
.ranges i.annual { background: #1890ff; }
.widgets { position: relative; margin-top: 20px; display: flex; flex-direction: column; gap: 8px; }
.row { display: flex; gap: 72px; }
.second { padding-left: 381px; }
.card { width: 690px; height: 408px; background: #fff; border-radius: 5px; box-shadow: 0 0 10px rgba(0,0,0,.1); flex: none; }
.card.wide { width: 754px; }
.card h2 { height: 45px; padding: 16px 12px 0; font: 18px/21px "Liberation Sans", sans-serif; letter-spacing: .25px; }
.track, .bar { fill: none; stroke: #e5e5e5; stroke-width: 39.2; stroke-linecap: round; }
.thin { stroke-width: 27; }
.red { stroke: #e8202d; }
.blue { stroke: #04bcfc; }
.gauge text { fill: #5c5c61; }
.value { font-size: 63px; letter-spacing: .8px; }
.value.small { font-size: 44px; }
.unit { font: 300 34px Inter, sans-serif; letter-spacing: 1.500px; }
.unit.percent { font-size: 32px; }
.limit { font-size: 34px; letter-spacing: 2.500px; }
.scrollbar { position: absolute; right: 2px; top: -6px; width: 8px; height: 488px; border-radius: 4px; background: #e3e3e3; }
.region { position: absolute; right: -8px; bottom: 0; width: 191px; height: 38px; background: rgba(255,255,255,.8); font-size: 12px; letter-spacing: .15px; display: flex; gap: 9px; align-items: center; padding-left: 16px; color: #333; }
.region a { color: #8f9ee8; }

/* desktop panel */
.taskbar { flex: none; height: 52px; background: #1c5fb4; display: flex; align-items: center; color: #071018; font: 300 16px Roboto, sans-serif; padding-left: 7px; }
.t-pi, .ic48 { width: 48px; height: 48px; }
.t-globe { width: 46px; height: 46px; margin-left: 15px; }
.t-folders { width: 48px; height: 42px; margin-left: 7px; }
.t-term { width: 46px; height: 40px; margin: 0 15px 0 7px; }
.task { flex: none; height: 52px; display: flex; align-items: center; gap: 5px; }
.webcord { width: 211px; }
.discord-tile { width: 48px; height: 48px; background: #5865f2; color: #fff; display: grid; place-items: center; }
.current { width: 214px; background: #23508f; padding-left: 3px; border-radius: 3px; letter-spacing: .1px; }
.vscode { width: 217px; padding-left: 5px; }
.unsaved { width: 13px; height: 13px; border-radius: 50%; background: #000; margin-left: 3px; }
.home { width: 214px; }
.files { width: 217px; }
.tray { flex: none; display: flex; align-items: center; }
.t-discord { position: relative; color: #f3f3f3; }
.t-discord i { position: absolute; width: 15px; height: 15px; border-radius: 50%; background: #ff2a2e; right: -1px; top: 0; }
.t-conn { width: 40px; height: 40px; margin-left: 11px; }
.t-bt { width: 22px; height: 42px; margin-left: 23px; }
.t-wifi { width: 40px; height: 36px; margin-left: 27px; }
.t-vol { width: 38px; height: 32px; margin-left: 17px; }
.t-mic { width: 28px; height: 42px; margin-left: 21px; }
.clock { width: 53px; margin-left: 22px; }
.meter { position: relative; width: 69px; height: 46px; border: 1px solid #10233c; margin-right: 6px; display: grid; place-items: center; font: 15px "Liberation Mono", monospace; color: #000; }
.meter svg { position: absolute; inset: 0; width: 100%; height: 100%; }
.meter span { position: relative; margin: 3px 0 0 8px; -webkit-text-stroke: .2px; }
.cpu { background: #3584e4; }
.gpu { background: #9141ac; }
.temp { background: #26a269; }
```
